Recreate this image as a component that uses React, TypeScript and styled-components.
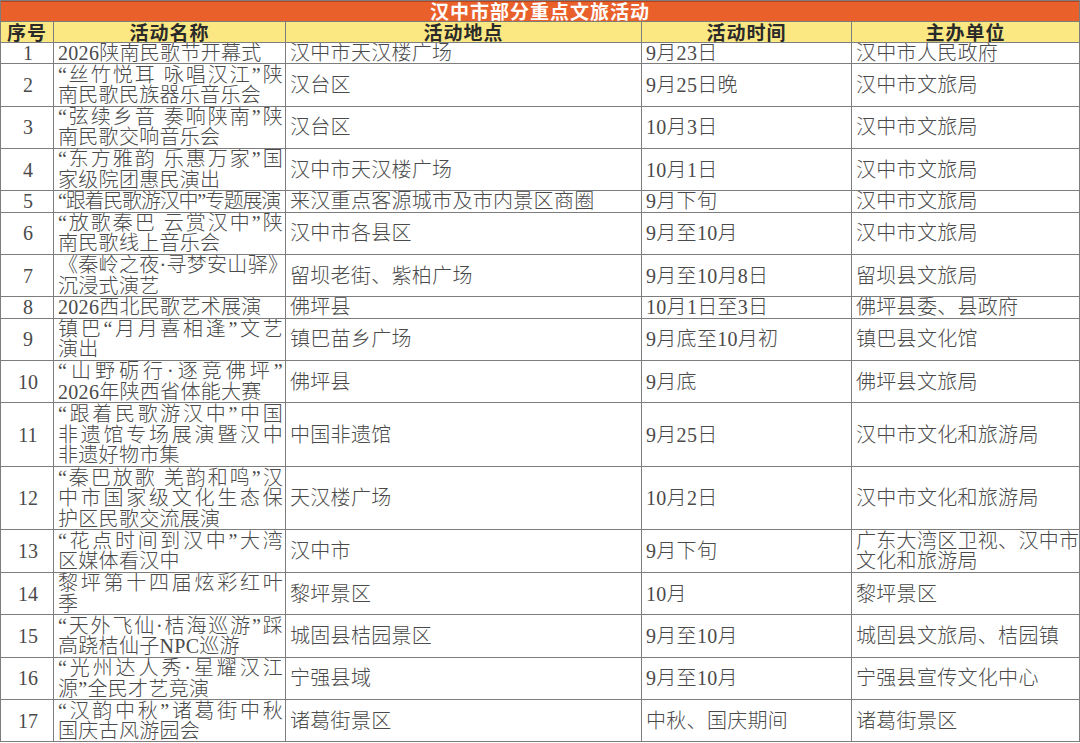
import React from "react";
import styled, { createGlobalStyle } from "styled-components";

const GlobalStyle = createGlobalStyle`
  html, body { margin: 0; padding: 0; background: #ffffff; }
  body { width: 1080px; height: 743px; overflow: hidden; }
`;

type Row = {
  no: string;
  name: string[];
  place: string[];
  time: string[];
  org: string[];
  tight?: boolean;
};

const rows: Row[] = [
  { no: "1", name: ["2026陕南民歌节开幕式"], place: ["汉中市天汉楼广场"], time: ["9月23日"], org: ["汉中市人民政府"] },
  { no: "2", name: ["“丝竹悦耳 咏唱汉江”陕", "南民歌民族器乐音乐会"], place: ["汉台区"], time: ["9月25日晚"], org: ["汉中市文旅局"] },
  { no: "3", name: ["“弦续乡音 奏响陕南”陕", "南民歌交响音乐会"], place: ["汉台区"], time: ["10月3日"], org: ["汉中市文旅局"] },
  { no: "4", name: ["“东方雅韵 乐惠万家”国", "家级院团惠民演出"], place: ["汉中市天汉楼广场"], time: ["10月1日"], org: ["汉中市文旅局"] },
  { no: "5", name: ["“跟着民歌游汉中”专题展演"], place: ["来汉重点客源城市及市内景区商圈"], time: ["9月下旬"], org: ["汉中市文旅局"], tight: true },
  { no: "6", name: ["“放歌秦巴 云赏汉中”陕", "南民歌线上音乐会"], place: ["汉中市各县区"], time: ["9月至10月"], org: ["汉中市文旅局"] },
  { no: "7", name: ["《秦岭之夜·寻梦安山驿》", "沉浸式演艺"], place: ["留坝老街、紫柏广场"], time: ["9月至10月8日"], org: ["留坝县文旅局"] },
  { no: "8", name: ["2026西北民歌艺术展演"], place: ["佛坪县"], time: ["10月1日至3日"], org: ["佛坪县委、县政府"] },
  { no: "9", name: ["镇巴“月月喜相逢”文艺", "演出"], place: ["镇巴苗乡广场"], time: ["9月底至10月初"], org: ["镇巴县文化馆"] },
  { no: "10", name: ["“山野砺行·逐竞佛坪”", "2026年陕西省体能大赛"], place: ["佛坪县"], time: ["9月底"], org: ["佛坪县文旅局"] },
  { no: "11", name: ["“跟着民歌游汉中”中国", "非遗馆专场展演暨汉中", "非遗好物市集"], place: ["中国非遗馆"], time: ["9月25日"], org: ["汉中市文化和旅游局"] },
  { no: "12", name: ["“秦巴放歌 羌韵和鸣”汉", "中市国家级文化生态保", "护区民歌交流展演"], place: ["天汉楼广场"], time: ["10月2日"], org: ["汉中市文化和旅游局"] },
  { no: "13", name: ["“花点时间到汉中”大湾", "区媒体看汉中"], place: ["汉中市"], time: ["9月下旬"], org: ["广东大湾区卫视、汉中市", "文化和旅游局"] },
  { no: "14", name: ["黎坪第十四届炫彩红叶", "季"], place: ["黎坪景区"], time: ["10月"], org: ["黎坪景区"] },
  { no: "15", name: ["“天外飞仙·桔海巡游”踩", "高跷桔仙子NPC巡游"], place: ["城固县桔园景区"], time: ["9月至10月"], org: ["城固县文旅局、桔园镇"] },
  { no: "16", name: ["“光州达人秀·星耀汉江", "源”全民才艺竞演"], place: ["宁强县域"], time: ["9月至10月"], org: ["宁强县宣传文化中心"] },
  { no: "17", name: ["“汉韵中秋”诸葛街中秋", "国庆古风游园会"], place: ["诸葛街景区"], time: ["中秋、国庆期间"], org: ["诸葛街景区"] },
];

const rowUnit = 21.2;
const lineH = 20;

const Table = styled.div<{ $rows: string }>`
  display: grid;
  width: 1080px;
  box-sizing: border-box;
  grid-template-columns: 52px 231px 355px 209px 1fr;
  grid-template-rows: ${(p) => p.$rows};
  gap: 1px;
  padding: 1px;
  background: #7d7d7d;
`;

const TitleBar = styled.div`
  grid-column: 1 / -1;
  background: #e9602b;
  color: #ffffff;
  font-family: "Noto Sans CJK SC", sans-serif;
  font-weight: 700;
  font-size: 19px;
  line-height: 20px;
  text-align: center;
  letter-spacing: 1px;
  overflow: hidden;
  box-shadow: inset 0 1px 0 #b8431c;
`;

const HeadCell = styled.div`
  background: #fbe883;
  color: #2a2a2a;
  font-family: "Noto Sans CJK SC", sans-serif;
  font-weight: 700;
  font-size: 19px;
  line-height: 20px;
  letter-spacing: 1px;
  text-align: center;
  overflow: hidden;
  white-space: nowrap;
`;

const Cell = styled.div<{ $center?: boolean }>`
  background: #ffffff;
  display: flex;
  flex-direction: column;
  justify-content: space-evenly;
  align-items: ${(p) => (p.$center ? "center" : "stretch")};
  padding: 0 2px 0 4px;
  overflow: hidden;
  color: #4a4a4a;
  font-family: "Liberation Serif", "Noto Sans CJK SC", serif;
  font-weight: 300;
  font-size: 20px;
  line-height: ${lineH}px;
`;

const Line = styled.div<{ $justify?: boolean; $tight?: boolean }>`
  white-space: nowrap;
  height: ${lineH}px;
  text-align: ${(p) => (p.$justify ? "justify" : "left")};
  text-align-last: ${(p) => (p.$justify ? "justify" : "auto")};
  letter-spacing: ${(p) => (p.$tight ? "-1.2px" : "0.3px")};
`;

const Num = styled.span`
  font-family: "Liberation Serif", serif;
  font-size: 20px;
  line-height: ${lineH}px;
  color: #4a4a4a;
`;

function Lines({ lines, tight }: { lines: string[]; tight?: boolean }) {
  return (
    <>
      {lines.map((l, i) => (
        <Line key={i} $justify={lines.length > 1 && i < lines.length - 1} $tight={tight}>
          {l}
        </Line>
      ))}
    </>
  );
}

export default function App() {
  const rowHeights = rows.map((r) => {
    const n = Math.max(r.name.length, r.org.length, 1);
    return `${(n * rowUnit - 1).toFixed(2)}px`;
  });
  const template = ["20px", "20px", ...rowHeights].join(" ");
  return (
    <>
      <GlobalStyle />
      <Table $rows={template}>
        <TitleBar>汉中市部分重点文旅活动</TitleBar>
        <HeadCell>序号</HeadCell>
        <HeadCell>活动名称</HeadCell>
        <HeadCell>活动地点</HeadCell>
        <HeadCell>活动时间</HeadCell>
        <HeadCell>主办单位</HeadCell>
        {rows.map((r) => (
          <React.Fragment key={r.no}>
            <Cell $center>
              <Num>{r.no}</Num>
            </Cell>
            <Cell>
              <Lines lines={r.name} tight={r.tight} />
            </Cell>
            <Cell>
              <Lines lines={r.place} />
            </Cell>
            <Cell>
              <Lines lines={r.time} />
            </Cell>
            <Cell>
              <Lines lines={r.org} />
            </Cell>
          </React.Fragment>
        ))}
      </Table>
    </>
  );
}
